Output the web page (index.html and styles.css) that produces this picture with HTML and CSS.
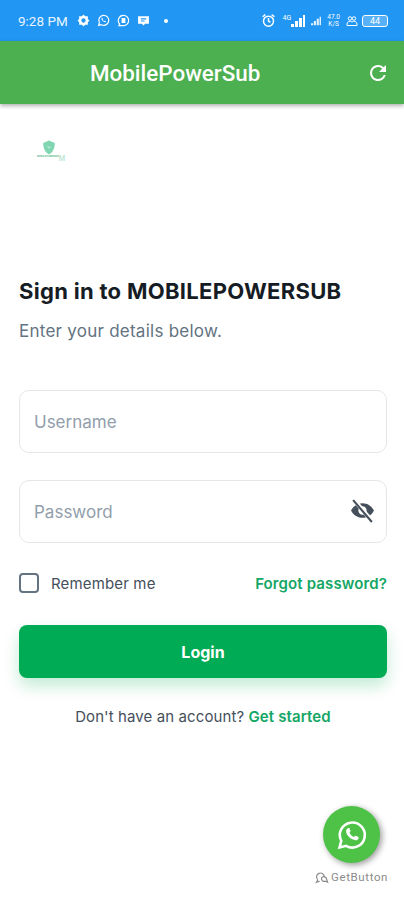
FILE: index.html
```html
<!DOCTYPE html>
<html lang="en">

<head>
    <meta charset="UTF-8">
    <meta name="viewport" content="width=device-width, initial-scale=1.0">
    <title>MobilePowerSub</title>
    <link rel="stylesheet" href="styles.css">
</head>

<body>
    <div class="status-bar">
        <div class="status-left">
            <span class="status-time">9:28 PM</span>
            <svg class="status-icon" viewBox="0 0 24 24"><path fill="#fff" fill-rule="evenodd" d="M12 1l3 3h5v5l3 3-3 3v5h-5l-3 3-3-3H4v-5l-3-3 3-3V4h5zm0 7a4 4 0 1 0 0 8 4 4 0 0 0 0-8z"/></svg>
            <svg class="status-icon" viewBox="0 0 24 24"><path fill="none" stroke="#fff" stroke-width="2.2" d="M3 21l1.4-5A9.2 9.2 0 1 1 8 19.700z"/><path fill="#fff" d="M8.500 7.500c1-1 1.800-.6 2.200.6.300.9-.6 1.300-.4 1.900.5 1.300 1.500 2.300 2.900 2.900.7.200 1-.9 1.900-.5 1.300.5 1.700 1.100.7 2.300-1.500 1.500-8.800-2.700-7.300-7.200z"/></svg>
            <svg class="status-icon" viewBox="0 0 24 24"><path fill="none" stroke="#fff" stroke-width="2.200" d="M12 2.500a9.500 9.500 0 0 1 0 19H3.500l1.500-3A9.500 9.500 0 0 1 12 2.500z"/><rect x="8.500" y="7.500" width="7" height="9" rx="1" fill="#fff"/></svg>
            <svg class="status-icon" viewBox="0 0 24 24"><path fill="#fff" fill-rule="evenodd" d="M2 4h20v14h-7l-3 3-3-3H2zm5 4v2h10V8zm0 4v2h7v-2z"/></svg>
            <span class="status-dot"></span>
        </div>
        <div class="status-right">
            <svg class="status-icon alarm" viewBox="0 0 24 24"><circle cx="12" cy="13" r="8" fill="none" stroke="#fff" stroke-width="2.400"/><path d="M12 8v5l3 2M2.500 6L7 2.500M21.500 6L17 2.500" fill="none" stroke="#fff" stroke-width="2.400"/></svg>
            <span class="signal-group">
                <span class="net-label">4G</span>
                <svg class="signal" viewBox="0 0 14 12"><path fill="#fff" d="M0 9h3v3H0zM4 6h3v6H4zM8 3h3v9H8zM12 0h2v12h-2z"/></svg>
            </span>
            <svg class="signal small" viewBox="0 0 14 12"><path fill="#fff" d="M0 9h3v3H0zM4 6h3v6H4zM8 3h3v9H8zM12 0h2v12h-2z" opacity=".85"/></svg>
            <span class="net-speed">47.0<br>K/S</span>
            <svg class="status-icon people" viewBox="0 0 24 24"><g fill="none" stroke="#fff" stroke-width="2"><circle cx="8" cy="7" r="3.500"/><circle cx="16" cy="7" r="3.500"/><path d="M2 21v-3a6 6 0 0 1 10-4 6 6 0 0 1 10 4v3z"/></g></svg>
            <span class="battery"><span class="battery-level">44</span></span>
        </div>
    </div>

    <header class="app-bar">
        <h1>MobilePowerSub</h1>
        <svg class="refresh" viewBox="0 0 24 24"><path fill="#fff" d="M17.650 6.350A7.958 7.958 0 0 0 12 4a8 8 0 1 0 7.740 10h-2.080A6 6 0 1 1 12 6c1.660 0 3.140.69 4.220 1.780L13 11h7V4z"/></svg>
    </header>

    <main class="content">
        <div class="logo">
            <svg class="logo-shield" viewBox="0 0 24 26"><path fill="#7fd6b0" d="M12 1l10 4c0 9-3 16-10 20C5 21 2 14 2 5z"/><path fill="#c4eddb" d="M8 10l4 5 4-5-4 2z"/></svg>
            <div class="logo-line">
                <span class="logo-text">MOBILEPOWERSUB</span>
                <span class="logo-mark">M</span>
            </div>
        </div>

        <h2>Sign in to MOBILEPOWERSUB</h2>
        <p class="subtitle">Enter your details below.</p>

        <form class="login-form">
            <div class="field">
                <input type="text" placeholder="Username">
            </div>
            <div class="field">
                <input type="password" placeholder="Password">
                <svg class="eye" viewBox="0 0 24 24"><path fill="#454f5b" d="M12 5c-5 0-9 3-11 7 2 4 6 7 11 7s9-3 11-7c-2-4-6-7-11-7zm0 11a4 4 0 1 1 0-8 4 4 0 0 1 0 8z"/><path stroke="#fff" stroke-width="4" d="M4 2l17 20"/><path stroke="#454f5b" stroke-width="2" d="M3 2l18 21"/></svg>
            </div>
            <div class="form-row">
                <label class="remember"><span class="checkbox"></span>Remember me</label>
                <a class="link forgot">Forgot password?</a>
            </div>
            <button type="button">Login</button>
        </form>

        <p class="signup">Don't have an account? <a class="link">Get started</a></p>
    </main>

    <div class="chat-widget">
        <div class="chat-button">
            <svg viewBox="0 0 32 32"><path fill="none" stroke="#fff" stroke-width="2.600" d="M3.500 28.500l1.800-6.600A12.500 12.500 0 1 1 10 26.800z"/><path fill="#fff" d="M11.500 9.500c.9-.9 1.700-.8 2.100.1l.9 2.100c.2.500-.6 1.400-1 2 .9 1.900 2.400 3.300 4.300 4.200.7-.5 1.400-1.500 2-1.200l2.200 1c.9.500.8 1.300.3 2.200-1.100 1.700-3.700 1.800-6.500.2-3.700-2.100-6.200-6-5.600-8.800.2-.7.700-1.300 1.300-1.800z"/></svg>
        </div>
        <div class="getbutton">
            <svg viewBox="0 0 16 14"><g fill="none" stroke="#8c8c8c" stroke-width="1.300"><path d="M3 9.500A4.200 4.200 0 1 1 10 6.500"/><path d="M3 9.500L1.500 12l3.500-1M7 7.500a3 3 0 0 1 5.500 1.500l1 3-2.500-1A3 3 0 0 1 7 7.500z"/></g></svg>
            <span>GetButton</span>
        </div>
    </div>
</body>

</html>
```

FILE: styles.css
```css
* {
    box-sizing: border-box;
}

body {
    font-family: "Inter", "Open Sans", sans-serif;
    margin: 0;
    padding: 0;
    width: 404px;
    height: 900px;
    position: relative;
    overflow: hidden;
    background-color: #ffffff;
    color: #212b36;
}

.status-bar {
    height: 41px;
    padding: 0 16px 0 18px;
    background-color: #2196f3;
    color: #ffffff;
    display: flex;
    align-items: center;
    justify-content: space-between;
}

.status-left,
.status-right {
    display: flex;
    align-items: center;
}

.status-time {
    font-family: "Roboto", sans-serif;
    font-size: 13.500px;
    margin-right: 9px;
    opacity: 0.9;
}

.status-icon {
    width: 13px;
    height: 13px;
    margin-right: 7px;
}

.status-dot {
    width: 4px;
    height: 4px;
    margin-left: 7px;
    border-radius: 50%;
    background-color: #ffffff;
}

.status-right .alarm {
    width: 15px;
    height: 15px;
    margin-right: 7px;
}

.signal-group {
    display: flex;
    align-items: flex-end;
    margin-right: 6px;
}

.net-label {
    font-family: "Roboto", sans-serif;
    font-size: 7px;
    line-height: 7px;
    align-self: flex-start;
}

.signal {
    width: 14px;
    height: 12px;
}

.signal.small {
    width: 10px;
    margin-right: 6px;
}

.net-speed {
    font-family: "Roboto", sans-serif;
    font-size: 6.500px;
    line-height: 7px;
    text-align: center;
    margin-right: 6px;
}

.status-right .people {
    width: 12px;
    height: 12px;
    margin-right: 4px;
}

.battery {
    width: 26px;
    height: 12px;
    border: 1px solid #ffffff;
    border-radius: 3px;
    display: flex;
    align-items: center;
    justify-content: center;
    background-color: rgba(255, 255, 255, 0.25);
}

.battery-level {
    font-family: "Roboto", sans-serif;
    font-size: 9px;
    line-height: 10px;
}

.app-bar {
    height: 63px;
    padding: 0 14px 0 90px;
    background-color: #4caf50;
    color: #ffffff;
    display: flex;
    align-items: center;
    justify-content: space-between;
    box-shadow: 0 2px 4px rgba(0, 0, 0, 0.3);
    position: relative;
}

.app-bar h1 {
    font-family: "Roboto", sans-serif;
    font-size: 22.400px;
    font-weight: 500;
    margin: 0;
}

.refresh {
    width: 24px;
    height: 24px;
}

.content {
    padding: 36px 17px 0 19px;
}

.logo {
    width: 30px;
    margin-left: 17px;
    height: 24px;
    display: flex;
    flex-direction: column;
    align-items: center;
}

.logo-shield {
    width: 14px;
    height: 15px;
    margin-right: 4px;
}

.logo-line {
    display: flex;
    align-items: flex-start;
    width: 28px;
}

.logo-text {
    width: 22px;
    font-size: 2.400px;
    line-height: 4px;
    font-weight: 700;
    color: #54b98d;
    white-space: nowrap;
    overflow: hidden;
}

.logo-mark {
    font-size: 7px;
    line-height: 7px;
    color: #a5dcc3;
}

h2 {
    font-size: 22px;
    line-height: 28px;
    font-weight: 700;
    letter-spacing: 0.3px;
    margin: 113px 0 0;
    color: #161c24;
}

.subtitle {
    font-size: 17px;
    line-height: 24px;
    letter-spacing: 0.25px;
    margin: 14px 0 0;
    color: #637381;
}

.login-form {
    margin-top: 47px;
}

.field {
    height: 63px;
    margin-bottom: 27px;
    position: relative;
}

.field input {
    width: 100%;
    height: 100%;
    padding: 0 48px 0 14px;
    font-family: inherit;
    font-size: 17px;
    border: 1px solid #e4e7ea;
    border-radius: 10px;
    outline: none;
}

.field input::placeholder {
    color: #919eab;
    opacity: 1;
}

.eye {
    position: absolute;
    right: 12px;
    top: 18px;
    width: 25px;
    height: 25px;
}

.form-row {
    display: flex;
    align-items: center;
    justify-content: space-between;
    height: 26px;
}

.remember {
    display: flex;
    align-items: center;
    font-size: 15px;
    letter-spacing: 0.15px;
    color: #454f5b;
}

.checkbox {
    width: 20px;
    height: 20px;
    margin-right: 12px;
    border: 2px solid #637381;
    border-radius: 4px;
}

.link {
    color: #13a664;
    font-weight: 600;
    font-size: 15px;
    letter-spacing: 0.12px;
}

.login-form button {
    width: 100%;
    height: 53px;
    margin-top: 29px;
    display: block;
    background-color: #00ab55;
    color: #ffffff;
    font-family: inherit;
    font-size: 16px;
    font-weight: 700;
    border: none;
    border-radius: 8px;
    box-shadow: 0 8px 16px rgba(0, 171, 85, 0.24);
}

.signup {
    font-size: 15px;
    line-height: 22px;
    letter-spacing: 0.1px;
    margin: 28px 0 0;
    text-align: center;
    color: #454f5b;
}

.chat-widget {
    position: absolute;
    right: 16px;
    top: 806px;
    display: flex;
    flex-direction: column;
    align-items: center;
}

.chat-button {
    width: 57px;
    height: 57px;
    border-radius: 50%;
    background-color: #4dc247;
    display: flex;
    align-items: center;
    justify-content: center;
    box-shadow: 2px 2px 6px rgba(0, 0, 0, 0.4);
}

.chat-button svg {
    width: 32px;
    height: 32px;
}

.getbutton {
    display: flex;
    align-items: center;
    margin-top: 7px;
    font-family: "Roboto", sans-serif;
    font-size: 11.500px;
    color: #8c8c8c;
    letter-spacing: 0.6px;
}

.getbutton svg {
    width: 15px;
    height: 13px;
    margin-right: 1px;
}
```
